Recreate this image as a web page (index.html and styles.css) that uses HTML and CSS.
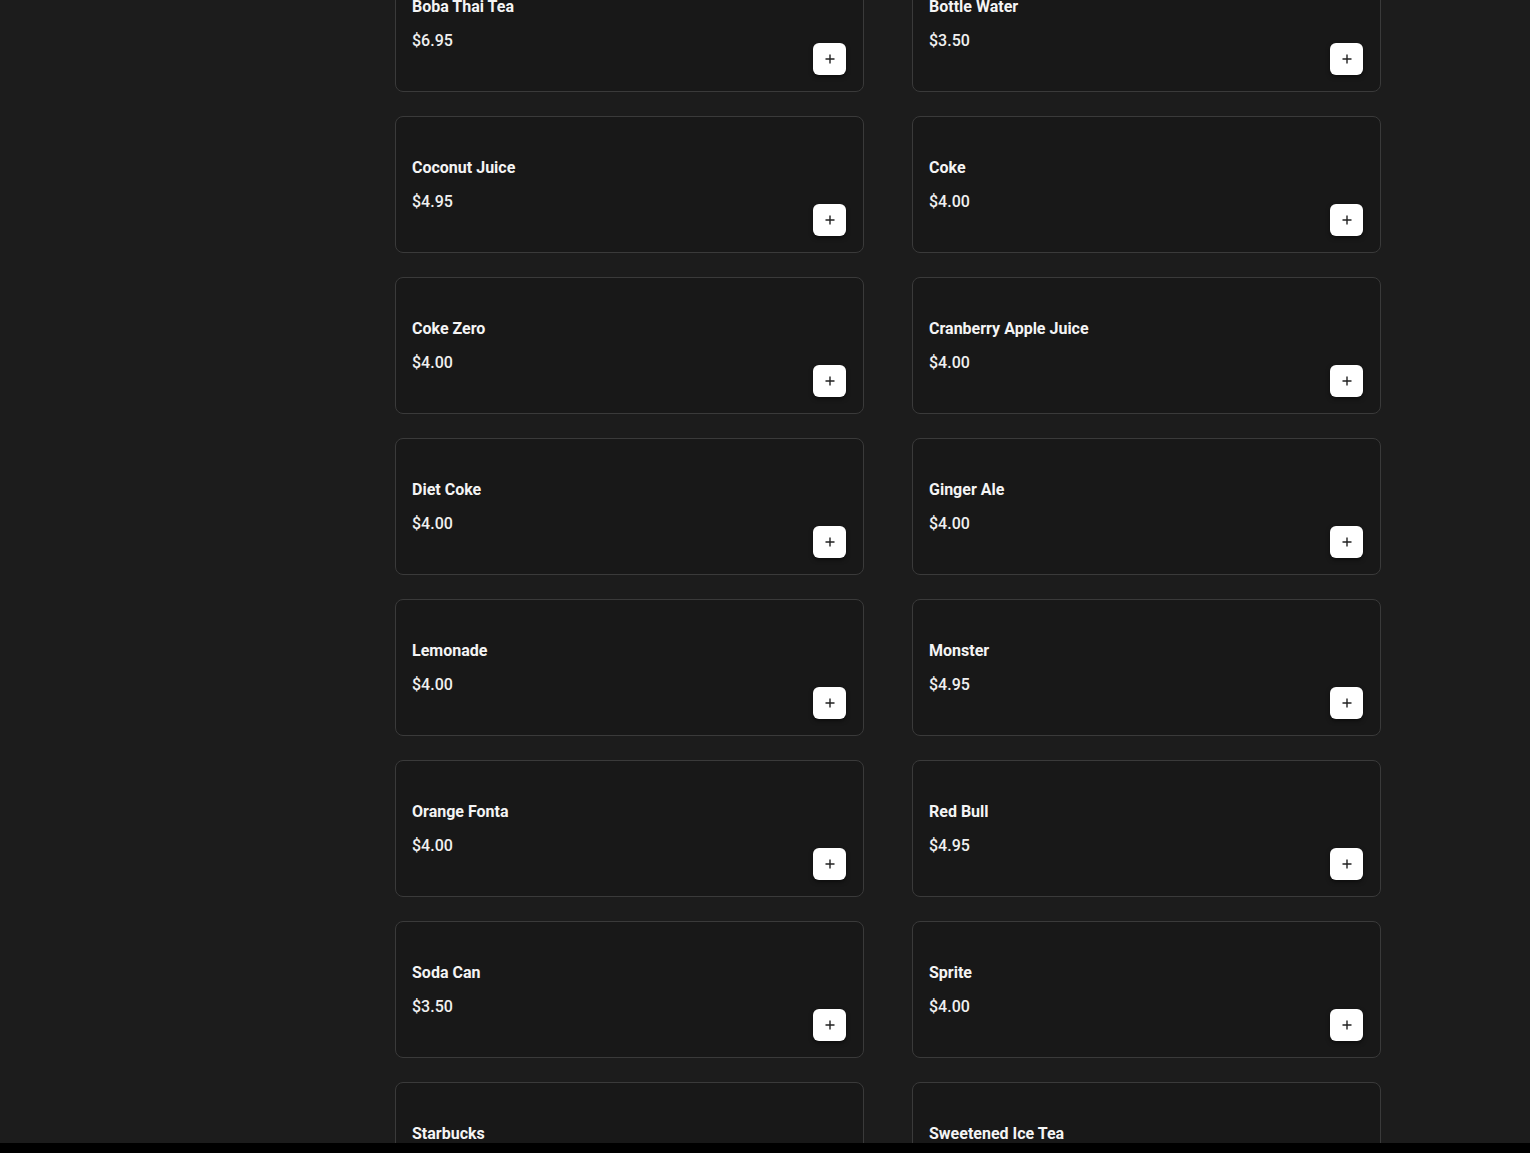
FILE: index.html
```html
<!DOCTYPE html>
<html lang="en">
<head>
<meta charset="utf-8">
<title>Menu - Drinks</title>
<link rel="stylesheet" href="styles.css">
</head>
<body>
<div class="page">
  <aside class="side"></aside>
  <main class="grid">
    <div class="card"><div class="info"><div class="name">Boba Thai Tea</div><div class="price">$6.95</div></div><button class="add"><svg viewBox="0 0 12 12" width="12" height="12"><path d="M6 1.5v9M1.5 6h9" stroke="#222" stroke-width="1.4"/></svg></button></div>
    <div class="card"><div class="info"><div class="name">Bottle Water</div><div class="price">$3.50</div></div><button class="add"><svg viewBox="0 0 12 12" width="12" height="12"><path d="M6 1.5v9M1.5 6h9" stroke="#222" stroke-width="1.4"/></svg></button></div>
    <div class="card"><div class="info"><div class="name">Coconut Juice</div><div class="price">$4.95</div></div><button class="add"><svg viewBox="0 0 12 12" width="12" height="12"><path d="M6 1.5v9M1.5 6h9" stroke="#222" stroke-width="1.4"/></svg></button></div>
    <div class="card"><div class="info"><div class="name">Coke</div><div class="price">$4.00</div></div><button class="add"><svg viewBox="0 0 12 12" width="12" height="12"><path d="M6 1.5v9M1.5 6h9" stroke="#222" stroke-width="1.4"/></svg></button></div>
    <div class="card"><div class="info"><div class="name">Coke Zero</div><div class="price">$4.00</div></div><button class="add"><svg viewBox="0 0 12 12" width="12" height="12"><path d="M6 1.5v9M1.5 6h9" stroke="#222" stroke-width="1.4"/></svg></button></div>
    <div class="card"><div class="info"><div class="name">Cranberry Apple Juice</div><div class="price">$4.00</div></div><button class="add"><svg viewBox="0 0 12 12" width="12" height="12"><path d="M6 1.5v9M1.5 6h9" stroke="#222" stroke-width="1.4"/></svg></button></div>
    <div class="card"><div class="info"><div class="name">Diet Coke</div><div class="price">$4.00</div></div><button class="add"><svg viewBox="0 0 12 12" width="12" height="12"><path d="M6 1.5v9M1.5 6h9" stroke="#222" stroke-width="1.4"/></svg></button></div>
    <div class="card"><div class="info"><div class="name">Ginger Ale</div><div class="price">$4.00</div></div><button class="add"><svg viewBox="0 0 12 12" width="12" height="12"><path d="M6 1.5v9M1.5 6h9" stroke="#222" stroke-width="1.4"/></svg></button></div>
    <div class="card"><div class="info"><div class="name">Lemonade</div><div class="price">$4.00</div></div><button class="add"><svg viewBox="0 0 12 12" width="12" height="12"><path d="M6 1.5v9M1.5 6h9" stroke="#222" stroke-width="1.4"/></svg></button></div>
    <div class="card"><div class="info"><div class="name">Monster</div><div class="price">$4.95</div></div><button class="add"><svg viewBox="0 0 12 12" width="12" height="12"><path d="M6 1.5v9M1.5 6h9" stroke="#222" stroke-width="1.4"/></svg></button></div>
    <div class="card"><div class="info"><div class="name">Orange Fonta</div><div class="price">$4.00</div></div><button class="add"><svg viewBox="0 0 12 12" width="12" height="12"><path d="M6 1.5v9M1.5 6h9" stroke="#222" stroke-width="1.4"/></svg></button></div>
    <div class="card"><div class="info"><div class="name">Red Bull</div><div class="price">$4.95</div></div><button class="add"><svg viewBox="0 0 12 12" width="12" height="12"><path d="M6 1.5v9M1.5 6h9" stroke="#222" stroke-width="1.4"/></svg></button></div>
    <div class="card"><div class="info"><div class="name">Soda Can</div><div class="price">$3.50</div></div><button class="add"><svg viewBox="0 0 12 12" width="12" height="12"><path d="M6 1.5v9M1.5 6h9" stroke="#222" stroke-width="1.4"/></svg></button></div>
    <div class="card"><div class="info"><div class="name">Sprite</div><div class="price">$4.00</div></div><button class="add"><svg viewBox="0 0 12 12" width="12" height="12"><path d="M6 1.5v9M1.5 6h9" stroke="#222" stroke-width="1.4"/></svg></button></div>
    <div class="card"><div class="info"><div class="name">Starbucks</div><div class="price">$4.95</div></div><button class="add"><svg viewBox="0 0 12 12" width="12" height="12"><path d="M6 1.5v9M1.5 6h9" stroke="#222" stroke-width="1.4"/></svg></button></div>
    <div class="card"><div class="info"><div class="name">Sweetened Ice Tea</div><div class="price">$4.00</div></div><button class="add"><svg viewBox="0 0 12 12" width="12" height="12"><path d="M6 1.5v9M1.5 6h9" stroke="#222" stroke-width="1.4"/></svg></button></div>
  </main>
</div>
<div class="bottombar"></div>
</body>
</html>
```
FILE: styles.css
```css
html, body {
  margin: 0;
  padding: 0;
  background: #1c1c1c;
  overflow: hidden;
  height: 100%;
}
body {
  font-family: Roboto, "Liberation Sans", sans-serif;
  color: #ffffff;
}
.page {
  display: grid;
  grid-template-columns: 395px 986px;
  margin-top: -45px;
}
.grid {
  display: grid;
  grid-template-columns: 469px 469px;
  column-gap: 48px;
  row-gap: 24px;
}
.card {
  box-sizing: border-box;
  height: 137px;
  background: #181818;
  border: 1px solid #3a3a3a;
  border-radius: 8px;
  padding: 16px;
  display: flex;
  justify-content: space-between;
}
.info {
  display: flex;
  flex-direction: column;
  justify-content: center;
  gap: 10px;
}
.name {
  font-size: 16px;
  font-weight: 700;
  line-height: 24px;
  color: #f4f4f4;
}
.price {
  font-size: 16px;
  font-weight: 500;
  line-height: 24px;
  color: #f0f0f0;
}
.add {
  align-self: flex-end;
  width: 33px;
  height: 32px;
  margin-right: 1px;
  padding: 0;
  border: none;
  border-radius: 6px;
  background: #ffffff;
  box-shadow: 0 2px 4px rgba(0,0,0,0.5);
  display: flex;
  align-items: center;
  justify-content: center;
  cursor: pointer;
}
.add svg { display: block; }
.bottombar {
  position: fixed;
  left: 0;
  right: 0;
  bottom: 0;
  height: 10px;
  background: #000;
}
```
